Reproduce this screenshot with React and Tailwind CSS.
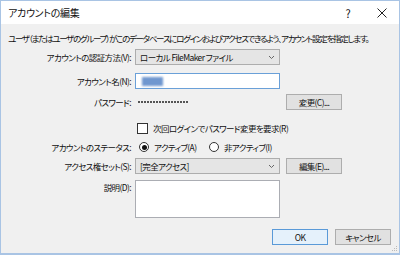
import React from 'react';

const jp = { fontFamily: '"Noto Sans CJK JP", "Noto Sans", sans-serif', fontFeatureSettings: '"palt"' };

const Label = ({ children }) => (
  <div className="w-[134px] shrink-0 pr-[4px] text-right whitespace-nowrap">{children}</div>
);

const Select = ({ children }) => (
  <div className="w-[145px] h-[16px] flex items-center justify-between border border-[#adadad] bg-[#e5e5e5] pl-[4px] pr-[4px]">
    <span className="whitespace-nowrap">{children}</span>
    <svg width="7" height="5" viewBox="0 0 7 5"><path d="M1 1l2.5 2.5L6 1" fill="none" stroke="#666" strokeWidth="1" /></svg>
  </div>
);

const Button = ({ children, primary }) => (
  <div className={`w-[56px] h-[16px] flex items-center justify-center whitespace-nowrap border ${primary ? 'border-[#5a9ad8] bg-[#e5f1fb]' : 'border-[#adadad] bg-[#e1e1e1]'}`}>
    {children}
  </div>
);

export default function App() {
  return (
    <div style={jp} className="w-[400px] h-[255px] overflow-hidden bg-[#f0f0f0] border-l border-r border-b-2 border-[#a9c4e4] text-[8.5px] tracking-[-0.6px] leading-[12px] text-[#111] flex flex-col relative">
      {/* title bar */}
      <div className="h-[24px] bg-white flex items-center pl-[7px] pr-[12px] text-[10px] tracking-[-0.3px] border-t border-[#a9c4e4]">
        <span className="flex-1">アカウントの編集</span>
        <span className="w-[14px] text-center mr-[22px] text-[11px]">?</span>
        <svg width="10" height="10" viewBox="0 0 10 10"><path d="M0.5 0.5l9 9M9.5 0.5l-9 9" stroke="#222" strokeWidth="1" /></svg>
      </div>

      <div className="mt-[8px] pl-[7px] h-[12px] whitespace-nowrap tracking-[-1.3px]">
        ユーザ（またはユーザのグループ）がこのデータベースにログインおよびアクセスできるよう、アカウント設定を指定します。
      </div>

      <div className="mt-[5px] h-[16px] flex items-center">
        <Label>アカウントの認証方法(V):</Label>
        <Select>ローカル FileMaker ファイル</Select>
      </div>

      <div className="mt-[8px] h-[16px] flex items-center">
        <Label>アカウント名(N):</Label>
        <div className="w-[145px] h-[16px] border border-[#6aa0d8] bg-white flex items-center pl-[6px]">
          <div className="w-[21px] h-[9px] bg-[#6f97cf] blur-[1px]" />
        </div>
      </div>

      <div className="mt-[5px] h-[16px] flex items-center">
        <Label>パスワード:</Label>
        <div className="w-[151px] pl-[3px] flex items-center gap-[1px]">
          {Array.from({ length: 17 }).map((_, i) => (
            <span key={i} className="w-[2px] h-[2px] rounded-full bg-[#222]" />
          ))}
        </div>
        <Button>変更(C)...</Button>
      </div>

      <div className="mt-[11px] h-[14px] flex items-center">
        <div className="w-[134px] shrink-0" />
        <div className="w-[11px] h-[11px] border border-[#333] bg-white ml-[2px] mr-[5px]" />
        <span className="whitespace-nowrap">次回ログインでパスワード変更を要求(R)</span>
      </div>

      <div className="mt-[5px] h-[14px] flex items-center">
        <Label>アカウントのステータス:</Label>
        <div className="w-[10px] h-[10px] rounded-full border border-[#333] bg-white flex items-center justify-center ml-[4px] mr-[5px]">
          <div className="w-[5px] h-[5px] rounded-full bg-[#111]" />
        </div>
        <span className="w-[50px] whitespace-nowrap">アクティブ(A)</span>
        <div className="w-[10px] h-[10px] rounded-full border border-[#333] bg-white ml-[5px] mr-[5px]" />
        <span className="whitespace-nowrap">非アクティブ(I)</span>
      </div>

      <div className="mt-[4px] h-[16px] flex items-center">
        <Label>アクセス権セット(S):</Label>
        <Select>[完全アクセス]</Select>
        <div className="ml-[6px]"><Button>編集(E)...</Button></div>
      </div>

      <div className="mt-[6px] h-[38px] flex items-start">
        <div className="w-[134px] shrink-0 pr-[4px] text-right pt-[1px]">説明(D):</div>
        <div className="w-[145px] h-[38px] border border-[#abadb3] bg-white" />
      </div>

      <div className="mt-[11px] h-[16px] flex items-center justify-end pr-[8px] gap-[7px]">
        <Button primary>OK</Button>
        <Button>キャンセル</Button>
      </div>

      <svg className="absolute right-[1px] bottom-[1px]" width="8" height="8" viewBox="0 0 8 8">
        <rect x="6" y="2" width="1" height="1" fill="#bbb" />
        <rect x="4" y="4" width="1" height="1" fill="#bbb" />
        <rect x="6" y="4" width="1" height="1" fill="#bbb" />
        <rect x="2" y="6" width="1" height="1" fill="#bbb" />
        <rect x="4" y="6" width="1" height="1" fill="#bbb" />
        <rect x="6" y="6" width="1" height="1" fill="#bbb" />
      </svg>
    </div>
  );
}
